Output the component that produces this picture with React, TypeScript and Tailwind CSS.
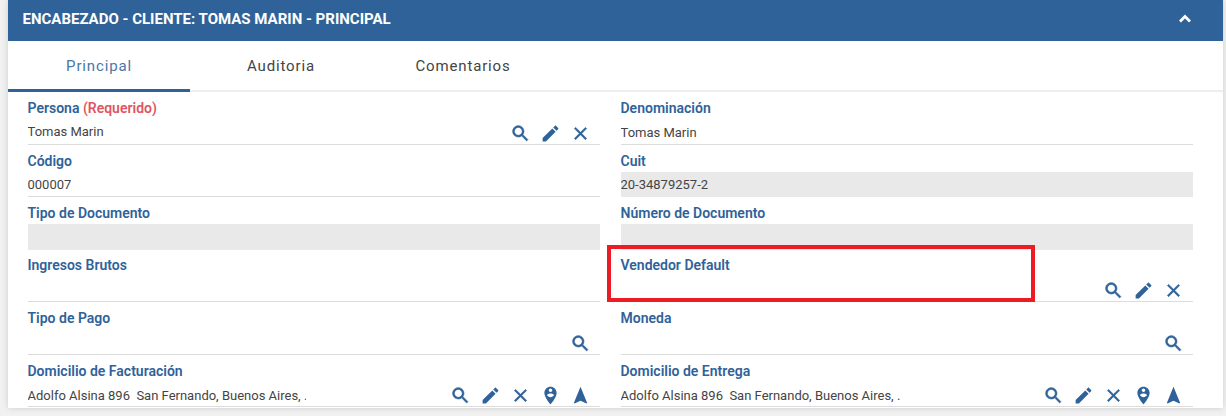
import React from "react";

const P = {
  search: "M15.5 14h-.79l-.28-.27C15.41 12.59 16 11.11 16 9.5 16 5.91 13.09 3 9.5 3S3 5.91 3 9.5 5.91 16 9.5 16c1.61 0 3.09-.59 4.23-1.57l.27.28v.79l5 4.99L20.49 19l-4.99-5zm-6 0C7.01 14 5 11.99 5 9.5S7.01 5 9.5 5 14 7.01 14 9.5 11.99 14 9.5 14z",
  edit: "M3 17.25V21h3.75L17.81 9.94l-3.75-3.75L3 17.25zM20.71 7.04c.39-.39.39-1.02 0-1.41l-2.34-2.34c-.39-.39-1.02-.39-1.41 0l-1.83 1.83 3.75 3.75 1.83-1.83z",
  close: "M19 6.41L17.59 5 12 10.59 6.41 5 5 6.41 10.59 12 5 17.59 6.41 19 12 13.41 17.59 19 19 17.59 13.41 12z",
  pin: "M12 2C8.14 2 5 5.14 5 9c0 5.25 7 13 7 13s7-7.75 7-13c0-3.86-3.14-7-7-7zm0 2c1.1 0 2 .9 2 2 0 1.11-.9 2-2 2s-2-.89-2-2c0-1.1.9-2 2-2zm0 10c-1.67 0-3.14-.85-4-2.15.02-1.32 2.67-2.05 4-2.05s3.98.73 4 2.05c-.86 1.3-2.33 2.15-4 2.15z",
  nav: "M12 2L4.5 20.29l.71.71L12 18l6.79 3 .71-.71z",
};
type IconName = keyof typeof P;

function Icon({ name }: { name: IconName }) {
  return (
    <span className="flex h-[22px] w-[30px] items-center justify-center pt-[4px]">
      <svg viewBox="0 0 24 24" className="h-[21px] w-[21px] fill-[#2f6299]">
        <path d={P[name]} stroke="#2f6299" strokeWidth={name === "search" || name === "close" ? 0.7 : 0} />
      </svg>
    </span>
  );
}

type FieldProps = {
  label: string;
  required?: boolean;
  value?: string;
  disabled?: boolean;
  icons?: IconName[];
  clip?: boolean;
  valueClass?: string;
  labelClass?: string;
};

function Field({ label, required, value, disabled, icons = [], clip, valueClass = "", labelClass = "pt-[6px]" }: FieldProps) {
  return (
    <div className="flex min-w-0 flex-col">
      <div className={`h-[27px] text-[14px] leading-[20px] font-semibold text-[#2f6299] ${labelClass}`}>
        {label}
        {required && <span className="text-[#e0565f]"> (Requerido)</span>}
      </div>
      <div
        className={`flex h-[25.5px] items-center justify-between pr-[5px] ${
          disabled ? "bg-[#e9e9e9]" : "border-b border-[#dcdcdc]"
        }`}
      >
        <span
          className={`overflow-hidden text-[13px] leading-[18px] whitespace-pre text-[#444444] ${clip ? "w-[278px]" : ""} ${valueClass}`}
        >
          {value}
        </span>
        <span className="flex">
          {icons.map((n, i) => (
            <Icon key={i} name={n} />
          ))}
        </span>
      </div>
    </div>
  );
}

const addr = "Adolfo Alsina 896  San Fernando, Buenos Aires, .";

export default function App() {
  return (
    <div
      className="h-[416px] w-[1226px] overflow-hidden bg-[#f1f1f1] pr-[3px] pl-[8px]"
      style={{ fontFamily: "Roboto, 'Noto Sans', sans-serif" }}
    >
      <div className="relative h-[408px] bg-white shadow-[0_0_6px_rgba(0,0,0,0.15)]">
        <div className="flex h-[41px] items-center justify-between bg-[#2f6299] pr-[28px] pl-[14.5px] pb-[3px]">
          <span className="text-[15px] font-bold text-white">ENCABEZADO - CLIENTE: TOMAS MARIN - PRINCIPAL</span>
          <svg viewBox="0 0 24 24" className="h-[20px] w-[20px] fill-none stroke-white stroke-[3.2]">
            <path d="M6 15l6-6 6 6" />
          </svg>
        </div>
        <div className="flex h-[51px] border-b-[2px] border-[#eeeeee]">
          <div className="-mb-[2px] flex w-[182px] items-center justify-center border-b-[3px] border-[#2f6299] pt-[3px] text-[15px] tracking-[0.85px] text-[#4a76a8]">
            Principal
          </div>
          <div className="flex w-[182px] items-center justify-center pt-[2px] text-[15px] tracking-[0.85px] text-[#444444]">
            Auditoria
          </div>
          <div className="flex w-[182px] items-center justify-center pt-[2px] text-[15px] tracking-[0.85px] text-[#444444]">
            Comentarios
          </div>
        </div>
        <div className="mt-[0.1px] grid grid-cols-[572.5px_572.5px] gap-x-[20.5px] pl-[19.5px]">
          <Field label="Persona" required value="Tomas Marin" valueClass="pt-[2px]" icons={["search", "edit", "close"]} />
          <Field label="Denominación" value="Tomas Marin" valueClass="pt-[4px]" />
          <Field label="Código" value="000007" valueClass="pt-[3px]" />
          <Field label="Cuit" value="20-34879257-2" disabled valueClass="pt-[1px]" />
          <Field label="Tipo de Documento" disabled />
          <Field label="Número de Documento" disabled />
          <Field label="Ingresos Brutos" labelClass="pt-[5px]" />
          <Field label="Vendedor Default" labelClass="pt-[5px]" icons={["search", "edit", "close"]} />
          <Field label="Tipo de Pago" icons={["search"]} />
          <Field label="Moneda" icons={["search"]} />
          <Field label="Domicilio de Facturación" value={addr} clip valueClass="pt-[4px]" icons={["search", "edit", "close", "pin", "nav"]} />
          <Field label="Domicilio de Entrega" value={addr} valueClass="pt-[4px]" icons={["search", "edit", "close", "pin", "nav"]} />
        </div>
        <div className="absolute top-[245px] left-[599px] h-[57px] w-[428px] border-[4px] border-[#ed1c24]" />
      </div>
    </div>
  );
}
